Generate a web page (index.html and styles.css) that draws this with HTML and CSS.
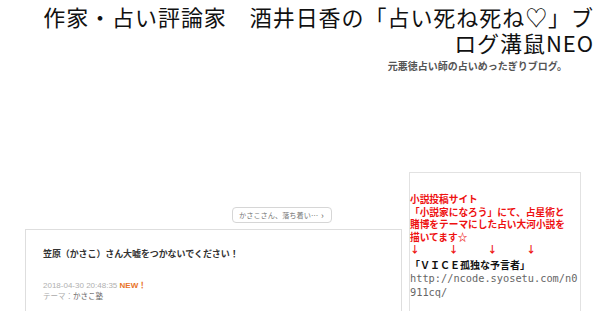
FILE: index.html
```html
<!DOCTYPE html>
<html lang="ja">
<head>
<meta charset="utf-8">
<title>占い死ね死ね♡</title>
<link rel="stylesheet" href="styles.css">
</head>
<body>
<header class="header">
  <h1 class="site-title">作家・占い評論家　酒井日香の「占い死ね死ね♡」ブログ溝鼠NEO</h1>
  <p class="site-desc">元悪徳占い師の占いめったぎりブログ。</p>
</header>
<div class="page">
  <main class="main">
    <div class="pager"><a class="pager-btn" href="#">かさこさん、落ち着い…<span class="chev">›</span></a></div>
    <article class="entry">
      <h2 class="entry-title">笠原（かさこ）さん大嘘をつかないでください！</h2>
      <p class="entry-date">2018-04-30 20:48:35 <span class="new">NEW！</span></p>
      <p class="entry-theme">テーマ：<span class="theme-name">かさこ塾</span></p>
    </article>
  </main>
  <aside class="side">
    <p class="side-red">小説投稿サイト<br>「小説家になろう」にて、占星術と<br>賭博をテーマにした占い大河小説を<br>描いてます☆<br>↓　　　↓　　　↓　　　↓</p>
    <p class="side-book">「ＶＩＣＥ孤独な予言者」</p>
    <p class="side-url">http://ncode.syosetu.com/n0911cq/</p>
  </aside>
</div>
</body>
</html>
```

FILE: styles.css
```css
html, body {
  margin: 0;
  padding: 0;
  background: #fff;
}
body {
  font-family: "Noto Sans CJK JP", "Noto Sans", sans-serif;
  color: #222;
  width: 600px;
  height: 311px;
  overflow: hidden;
}
p, h1, h2 { margin: 0; }

.header {
  padding: 3px 6px 0 37px;
  text-align: right;
}
.site-title {
  font-size: 22px;
  font-weight: 400;
  line-height: 26px;
  letter-spacing: 0.95px;
  color: #111;
}
.site-desc {
  margin-top: 5px;
  padding-right: 27px;
  font-size: 10px;
  line-height: 12px;
  font-weight: 700;
  color: #555;
}

.page {
  display: flex;
  align-items: flex-start;
  gap: 7px;
  padding-left: 25px;
}
.main {
  width: 377px;
  margin-top: 135px;
}
.pager {
  display: flex;
  align-items: flex-start;
  padding-left: 207px;
  height: 22px;
}
.pager-btn {
  display: flex;
  align-items: center;
  box-sizing: border-box;
  width: 100px;
  height: 16px;
  padding-left: 6px;
  border: 1px solid #d6d6d6;
  border-radius: 4px;
  font-size: 7.2px;
  color: #777;
  text-decoration: none;
}
.chev {
  margin-left: 3px;
  font-size: 9px;
  color: #666;
}
.entry {
  box-sizing: border-box;
  border: 1px solid #dedede;
  min-height: 120px;
  padding: 17px 17px 0 17px;
}
.entry-title {
  font-size: 9px;
  line-height: 14px;
  font-weight: 700;
  color: #333;
  letter-spacing: -0.1px;
}
.entry-date {
  margin-top: 20px;
  font-size: 8px;
  line-height: 10px;
  color: #b0b0b0;
  font-family: "Liberation Sans", "Noto Sans CJK JP", sans-serif;
}
.new {
  color: #e8742a;
  font-weight: 700;
}
.entry-theme {
  font-size: 7.5px;
  line-height: 10px;
  color: #aaa;
}
.theme-name { color: #666; }

.side {
  box-sizing: border-box;
  width: 172px;
  height: 160px;
  margin-top: 100px;
  border: 1px solid #e2e2e2;
  padding: 20px 0 0 0;
}
.side-red {
  font-size: 9.7px;
  line-height: 12.5px;
  font-weight: 700;
  color: #ee1111;
  white-space: nowrap;
}
.side-book {
  margin-top: 2px;
  font-size: 10px;
  line-height: 13px;
  font-weight: 700;
  color: #111;
}
.side-url {
  font-family: "DejaVu Sans Mono", monospace;
  font-size: 10.3px;
  line-height: 14px;
  color: #666;
  word-break: break-all;
}
```
